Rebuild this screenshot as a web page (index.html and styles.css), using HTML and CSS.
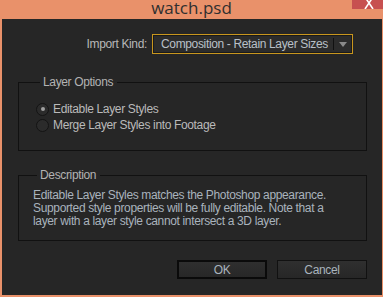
FILE: index.html
```html
<!DOCTYPE html>
<html lang="en">
<head>
  <meta charset="UTF-8">
  <title>watch.psd</title>
  <link rel="stylesheet" href="styles.css">
</head>
<body>

  <div class="window">
    <!-- Title bar -->
    <div class="titlebar">
      <span class="title">watch.psd</span>
      <div class="close">
        <svg width="12" height="9" viewBox="0 0 12 9">
          <path d="M2 -3 L10 9 M10 -3 L2 9" stroke="#fff" stroke-width="1.6" fill="none"/>
        </svg>
      </div>
    </div>

    <!-- Dialog body -->
    <div class="dialog">
      <div class="kind-row">
        <span class="label">Import Kind:</span>
        <div class="select">
          <span class="select-text">Composition - Retain Layer Sizes</span>
          <span class="select-sep"></span>
          <span class="select-arrow"></span>
        </div>
      </div>

      <fieldset class="group options">
        <legend>Layer Options</legend>
        <label class="radio"><span class="dot checked"></span>Editable Layer Styles</label>
        <label class="radio"><span class="dot"></span>Merge Layer Styles into Footage</label>
      </fieldset>

      <fieldset class="group desc">
        <legend>Description</legend>
        <p>Editable Layer Styles matches the Photoshop appearance.<br>
        Supported style properties will be fully editable. Note that a<br>
        layer with a layer style cannot intersect a 3D layer.</p>
      </fieldset>

      <div class="buttons">
        <button class="btn default">OK</button>
        <button class="btn">Cancel</button>
      </div>
    </div>
  </div>

</body>
</html>
```

FILE: styles.css
```css
body {
  margin: 0;
  background: #e9916a;
  font-family: "Liberation Sans", Arial, sans-serif;
}

.window {
  width: 383px;
  height: 297px;
  display: flex;
  flex-direction: column;
}

.titlebar {
  height: 19px;
  display: flex;
  justify-content: center;
  position: relative;
}

.title {
  font-family: "Open Sans", "Liberation Sans", sans-serif;
  font-size: 17px;
  line-height: 17px;
  color: #2f2f2f;
  margin-top: -1px;
}

.close {
  position: absolute;
  right: 0;
  top: 0;
  width: 31px;
  height: 9px;
  background: #c75050;
  display: flex;
  justify-content: center;
}

.close svg {
  margin-left: 2px;
}

.dialog {
  background: #262626;
  margin: 0 1px 2px 2px;
  flex: 1;
  color: #b3b3b3;
  font-size: 12px;
  letter-spacing: -0.35px;
  padding: 15px 15px 0 16px;
}

.kind-row {
  display: flex;
  align-items: center;
  justify-content: flex-end;
  margin-right: 14px;
  gap: 5px;
}

.label {
  color: #b8b8b8;
}

.select {
  width: 199px;
  height: 18px;
  border: 1px solid #c8961e;
  background: #2c2c2c;
  box-shadow: inset 0 0 0 1px #1a1a1a;
  display: flex;
  align-items: center;
  box-sizing: content-box;
  white-space: nowrap;
}

.select-text {
  padding-left: 8px;
  color: #b9c0c8;
  flex: 1;
}

.select-sep {
  width: 1px;
  height: 12px;
  background: #111;
  margin-right: 5px;
}

.select-arrow {
  width: 0;
  height: 0;
  border-left: 4px solid transparent;
  border-right: 4px solid transparent;
  border-top: 5px solid #8a8a8a;
  margin-right: 5px;
}

.group {
  border: 1px solid #111;
  margin: 0;
  padding: 0;
  width: 349px;
  box-sizing: border-box;
}

.group legend {
  padding: 0 4px 0 3px;
  margin-left: 4px;
  color: #b3b3b3;
  line-height: 14px;
}

.options {
  margin-top: 21px;
  height: 76px;
  padding: 12px 0 0 17px;
}

.radio {
  display: flex;
  align-items: center;
  height: 16px;
  gap: 4px;
  color: #bababa;
}

.dot {
  width: 11px;
  height: 11px;
  border-radius: 50%;
  border: 1px solid #141414;
  background: #2b2b2b;
  display: flex;
  align-items: center;
  justify-content: center;
}

.dot.checked::after {
  content: "";
  width: 4px;
  height: 4px;
  border-radius: 50%;
  background: #a0a0a0;
}

.desc {
  margin-top: 17px;
  height: 73px;
  padding: 0 0 0 14px;
}

.desc p {
  margin: 7px 0 0;
  line-height: 13px;
  color: #a9b3bd;
}

.buttons {
  display: flex;
  justify-content: flex-end;
  gap: 10px;
  margin-top: 19px;
}

.btn {
  width: 90px;
  height: 19px;
  font-family: "Liberation Sans", Arial, sans-serif;
  font-size: 12px;
  letter-spacing: -0.35px;
  color: #a9b3bd;
  background: linear-gradient(#2f2f2f, #272727);
  border: 1px solid #111;
  padding: 0;
}

.btn.default {
  border: 2px solid #0a0a0a;
}
```
